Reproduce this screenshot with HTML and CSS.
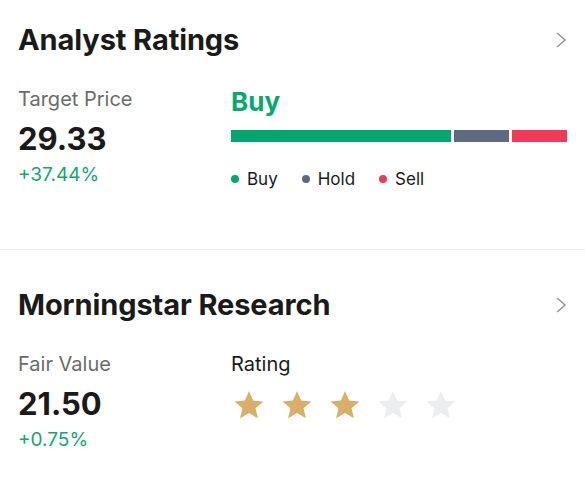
FILE: index.html
```html
<!DOCTYPE html>
<html lang="en">
<head>
  <meta charset="UTF-8">
  <title>Ratings</title>
  <link rel="stylesheet" href="styles.css">
</head>
<body>
  <section class="card">
    <div class="card-head">
      <h2>Analyst Ratings</h2>
      <svg class="chev" width="12" height="18" viewBox="0 0 12 18"><path d="M2 2l8 7-8 7" fill="none" stroke="#9a9a9a" stroke-width="1.6"/></svg>
    </div>
    <div class="card-body">
      <div class="left">
        <div class="label">Target Price</div>
        <div class="value">29.33</div>
        <div class="change">+37.44%</div>
      </div>
      <div class="right">
        <div class="verdict">Buy</div>
        <div class="bar">
          <span class="seg buy" style="flex: 220"></span>
          <span class="seg hold" style="flex: 55"></span>
          <span class="seg sell" style="flex: 55"></span>
        </div>
        <div class="legend">
          <span><i class="dot buy"></i>Buy</span>
          <span><i class="dot hold"></i>Hold</span>
          <span><i class="dot sell"></i>Sell</span>
        </div>
      </div>
    </div>
  </section>

  <section class="card second">
    <div class="card-head">
      <h2>Morningstar Research</h2>
      <svg class="chev" width="12" height="18" viewBox="0 0 12 18"><path d="M2 2l8 7-8 7" fill="none" stroke="#9a9a9a" stroke-width="1.6"/></svg>
    </div>
    <div class="card-body">
      <div class="left">
        <div class="label">Fair Value</div>
        <div class="value">21.50</div>
        <div class="change">+0.75%</div>
      </div>
      <div class="right">
        <div class="rating-label">Rating</div>
        <div class="stars">
          <svg viewBox="0 0 24 24"><path class="on" d="M12 1.5l3.1 7.2 7.7.6-5.9 5.1 1.8 7.6L12 18l-6.7 4 1.8-7.6-5.9-5.1 7.7-.6z"/></svg>
          <svg viewBox="0 0 24 24"><path class="on" d="M12 1.5l3.1 7.2 7.7.6-5.9 5.1 1.8 7.6L12 18l-6.7 4 1.8-7.6-5.9-5.1 7.7-.6z"/></svg>
          <svg viewBox="0 0 24 24"><path class="on" d="M12 1.5l3.1 7.2 7.7.6-5.9 5.1 1.8 7.6L12 18l-6.7 4 1.8-7.6-5.9-5.1 7.7-.6z"/></svg>
          <svg viewBox="0 0 24 24"><path class="off" d="M12 1.5l3.1 7.2 7.7.6-5.9 5.1 1.8 7.6L12 18l-6.7 4 1.8-7.6-5.9-5.1 7.7-.6z"/></svg>
          <svg viewBox="0 0 24 24"><path class="off" d="M12 1.5l3.1 7.2 7.7.6-5.9 5.1 1.8 7.6L12 18l-6.7 4 1.8-7.6-5.9-5.1 7.7-.6z"/></svg>
        </div>
      </div>
    </div>
  </section>
</body>
</html>
```

FILE: styles.css
```css
html, body {
  margin: 0;
  background: #fff;
}
body {
  font-family: Inter, "Noto Sans", sans-serif;
  color: #1a1a1a;
}
.card {
  padding: 23px 18px 0;
  height: 250px;
  box-sizing: border-box;
  border-bottom: 1px solid #ededed;
}
.card.second {
  border-bottom: none;
  padding-top: 38px;
}
.card-head {
  display: flex;
  justify-content: space-between;
  align-items: center;
}
.card-head h2 {
  margin: 0;
  font-size: 29px;
  font-weight: 700;
  line-height: 34px;
  letter-spacing: -0.1px;
}
.chev {
  margin-right: 0;
}
.card-body {
  display: grid;
  grid-template-columns: 213px 1fr;
  margin-top: 29px;
}
.label {
  font-size: 20px;
  color: #6b6b6b;
  line-height: 26px;
}
.value {
  font-size: 31px;
  font-weight: 700;
  line-height: 40px;
  margin-top: 7px;
}
.change {
  font-size: 19px;
  color: #12a870;
  line-height: 26px;
  margin-top: 3px;
}
.verdict {
  font-size: 26px;
  font-weight: 700;
  color: #07a86e;
  line-height: 28px;
  margin-top: 2px;
}
.bar {
  display: flex;
  gap: 3px;
  height: 12px;
  margin-top: 14px;
}
.seg.buy { background: #03a66d; }
.seg.hold { background: #5e6a82; }
.seg.sell { background: #f03a57; }
.legend {
  display: flex;
  gap: 24px;
  margin-top: 26px;
  font-size: 17px;
  line-height: 22px;
}
.legend span {
  display: flex;
  align-items: center;
}
.dot {
  width: 8px;
  height: 8px;
  border-radius: 50%;
  margin: 0 8px 0 0;
}
.dot.buy { background: #03a66d; }
.dot.hold { background: #5e6a82; }
.dot.sell { background: #f03a57; }
.rating-label {
  font-size: 20px;
  line-height: 26px;
}
.stars {
  display: flex;
  gap: 16px;
  margin-top: 12px;
  padding-left: 2px;
}
.stars svg {
  width: 32px;
  height: 32px;
}
.on { fill: #d8ae6a; }
.off { fill: #ecedef; }
```
